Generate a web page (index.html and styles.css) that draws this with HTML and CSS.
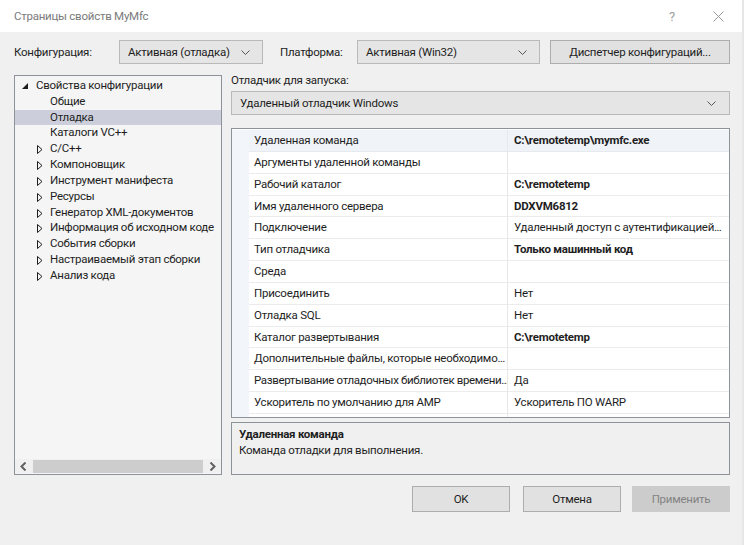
FILE: index.html
```html
<!DOCTYPE html>
<html lang="ru">
<head>
<meta charset="utf-8">
<title>Страницы свойств MyMfc</title>
<link rel="stylesheet" href="styles.css">
</head>
<body>
<div class="window">
  <div class="titlebar">
    <span class="title">Страницы свойств MyMfc</span>
    <span class="tb-btn help">?</span>
    <span class="tb-btn close"><svg width="11" height="11" viewBox="0 0 11 11"><path d="M0.5 0.5 L10.5 10.5 M10.5 0.5 L0.5 10.5" stroke="#9a9a9a" stroke-width="1" fill="none"/></svg></span>
  </div>

  <div class="toolbar">
    <span class="lbl lbl-config">Конфигурация:</span>
    <div class="combo combo-config"><span>Активная (отладка)</span><svg class="chev" width="9" height="5" viewBox="0 0 9 5"><path d="M0.5 0.5 L4.5 4.5 L8.5 0.5" stroke="#555" fill="none"/></svg></div>
    <span class="lbl lbl-platform">Платформа:</span>
    <div class="combo combo-platform"><span>Активная (Win32)</span><svg class="chev" width="9" height="5" viewBox="0 0 9 5"><path d="M0.5 0.5 L4.5 4.5 L8.5 0.5" stroke="#555" fill="none"/></svg></div>
    <div class="btn btn-manager">Диспетчер конфигураций...</div>
  </div>

  <div class="content">
    <div class="tree">
      <div class="tree-items">
        <div class="ti root"><svg class="exp" width="6" height="6" viewBox="0 0 6 6"><path d="M6 0 L6 6 L0 6 Z" fill="#1e1e1e"/></svg>Свойства конфигурации</div>
        <div class="ti leaf">Общие</div>
        <div class="ti leaf sel">Отладка</div>
        <div class="ti leaf">Каталоги VC++</div>
        <div class="ti node"><svg class="col" width="6" height="9" viewBox="0 0 6 9"><path d="M0.5 0.5 L5 4.5 L0.5 8.5 Z" fill="none" stroke="#1e1e1e"/></svg>C/C++</div>
        <div class="ti node"><svg class="col" width="6" height="9" viewBox="0 0 6 9"><path d="M0.5 0.5 L5 4.5 L0.5 8.5 Z" fill="none" stroke="#1e1e1e"/></svg>Компоновщик</div>
        <div class="ti node"><svg class="col" width="6" height="9" viewBox="0 0 6 9"><path d="M0.5 0.5 L5 4.5 L0.5 8.5 Z" fill="none" stroke="#1e1e1e"/></svg>Инструмент манифеста</div>
        <div class="ti node"><svg class="col" width="6" height="9" viewBox="0 0 6 9"><path d="M0.5 0.5 L5 4.5 L0.5 8.5 Z" fill="none" stroke="#1e1e1e"/></svg>Ресурсы</div>
        <div class="ti node"><svg class="col" width="6" height="9" viewBox="0 0 6 9"><path d="M0.5 0.5 L5 4.5 L0.5 8.5 Z" fill="none" stroke="#1e1e1e"/></svg>Генератор XML-документов</div>
        <div class="ti node"><svg class="col" width="6" height="9" viewBox="0 0 6 9"><path d="M0.5 0.5 L5 4.5 L0.5 8.5 Z" fill="none" stroke="#1e1e1e"/></svg>Информация об исходном коде</div>
        <div class="ti node"><svg class="col" width="6" height="9" viewBox="0 0 6 9"><path d="M0.5 0.5 L5 4.5 L0.5 8.5 Z" fill="none" stroke="#1e1e1e"/></svg>События сборки</div>
        <div class="ti node"><svg class="col" width="6" height="9" viewBox="0 0 6 9"><path d="M0.5 0.5 L5 4.5 L0.5 8.5 Z" fill="none" stroke="#1e1e1e"/></svg>Настраиваемый этап сборки</div>
        <div class="ti node"><svg class="col" width="6" height="9" viewBox="0 0 6 9"><path d="M0.5 0.5 L5 4.5 L0.5 8.5 Z" fill="none" stroke="#1e1e1e"/></svg>Анализ кода</div>
      </div>
      <div class="hscroll">
        <svg class="arr" width="7" height="9" viewBox="0 0 7 9"><path d="M5.5 0.5 L1.5 4.5 L5.5 8.5" stroke="#606060" stroke-width="2" fill="none"/></svg>
        <div class="thumb"></div>
        <svg class="arr" width="7" height="9" viewBox="0 0 7 9"><path d="M1.5 0.5 L5.5 4.5 L1.5 8.5" stroke="#606060" stroke-width="2" fill="none"/></svg>
      </div>
    </div>

    <div class="right">
      <div class="rlabel">Отладчик для запуска:</div>
      <div class="combo combo-debugger"><span>Удаленный отладчик Windows</span><svg class="chev" width="9" height="5" viewBox="0 0 9 5"><path d="M0.5 0.5 L4.5 4.5 L8.5 0.5" stroke="#555" fill="none"/></svg></div>

      <div class="grid">
        <div class="row selrow"><div class="gut"></div><div class="k">Удаленная команда</div><div class="v b">C:\remotetemp\mymfc.exe</div></div>
        <div class="row"><div class="gut"></div><div class="k">Аргументы удаленной команды</div><div class="v"></div></div>
        <div class="row"><div class="gut"></div><div class="k">Рабочий каталог</div><div class="v b">C:\remotetemp</div></div>
        <div class="row"><div class="gut"></div><div class="k">Имя удаленного сервера</div><div class="v b">DDXVM6812</div></div>
        <div class="row"><div class="gut"></div><div class="k">Подключение</div><div class="v">Удаленный доступ с аутентификацией…</div></div>
        <div class="row"><div class="gut"></div><div class="k">Тип отладчика</div><div class="v b">Только машинный код</div></div>
        <div class="row"><div class="gut"></div><div class="k">Среда</div><div class="v"></div></div>
        <div class="row"><div class="gut"></div><div class="k">Присоединить</div><div class="v">Нет</div></div>
        <div class="row"><div class="gut"></div><div class="k">Отладка SQL</div><div class="v">Нет</div></div>
        <div class="row"><div class="gut"></div><div class="k">Каталог развертывания</div><div class="v b">C:\remotetemp</div></div>
        <div class="row"><div class="gut"></div><div class="k">Дополнительные файлы, которые необходимо…</div><div class="v"></div></div>
        <div class="row"><div class="gut"></div><div class="k tight">Развертывание отладочных библиотек времени…</div><div class="v">Да</div></div>
        <div class="row"><div class="gut"></div><div class="k">Ускоритель по умолчанию для AMP</div><div class="v">Ускоритель ПО WARP</div></div>
        <div class="row"><div class="gut"></div><div class="k"></div><div class="v"></div></div>
      </div>

      <div class="desc">
        <div class="desc-title">Удаленная команда</div>
        <div class="desc-text">Команда отладки для выполнения.</div>
      </div>
    </div>
  </div>

  <div class="buttons">
    <div class="btn dlg">OK</div>
    <div class="btn dlg">Отмена</div>
    <div class="btn dlg disabled">Применить</div>
  </div>
</div>
</body>
</html>
```

FILE: styles.css
```css
* { box-sizing: border-box; }
html, body { margin: 0; padding: 0; }
body {
  width: 744px;
  height: 545px;
  overflow: hidden;
  background: #f0f0f0;
  font-family: Roboto, "Noto Sans", sans-serif;
  font-size: 11.5px;
  letter-spacing: -0.25px;
  color: #1e1e1e;
}
svg { flex: none; }
.window {
  width: 744px;
  height: 545px;
  display: flex;
  flex-direction: column;
  border-right: 2px solid #e6e6e6;
}
.titlebar {
  height: 32px;
  background: #ffffff;
  display: flex;
  align-items: center;
  padding-left: 14px;
}
.title {
  color: #7a7a7a;
  flex: 1;
}
.tb-btn {
  width: 46px;
  display: flex;
  justify-content: center;
  align-items: center;
  color: #a0a0a0;
  font-size: 13px;
}
.close { margin-right: 1px; }

.toolbar {
  margin-top: 8px;
  height: 24px;
  display: flex;
  align-items: center;
  padding-left: 14px;
}
.lbl-config { width: 105px; }
.lbl-platform { width: 77px; margin-left: 17px; }
.combo {
  height: 24px;
  background: #e5e5e5;
  border: 1px solid #b9b9b9;
  display: flex;
  align-items: center;
  justify-content: space-between;
  padding: 0 12px 0 8px;
}
.combo-config { width: 144px; }
.combo-platform { width: 183px; }
.btn {
  height: 24px;
  background: #e1e1e1;
  border: 1px solid #adadad;
  display: flex;
  align-items: center;
  justify-content: center;
}
.btn-manager { width: 180px; margin-left: 10px; }

.content {
  display: flex;
  margin-top: 11px;
  padding-left: 14px;
}
.tree {
  width: 208px;
  height: 400px;
  border: 1px solid #8e9399;
  background: #f5f5f5;
  display: flex;
  flex-direction: column;
}
.tree-items {
  flex: 1;
  padding-top: 2px;
  overflow: hidden;
}
.ti {
  height: 15.84px;
  line-height: 15.84px;
  white-space: nowrap;
  display: flex;
  align-items: center;
}
.root { padding-left: 7px; }
.root .exp { margin-right: 8px; margin-top: 1px; }
.leaf { padding-left: 35px; }
.node { padding-left: 22px; }
.node .col { margin-right: 7px; margin-top: 1px; }
.sel { background: #cccedb; }
.hscroll {
  height: 14px;
  display: flex;
  align-items: center;
  background: #f0f0f0;
  margin-bottom: 1px;
}
.arr { margin: 0 6px 0 5px; }
.hscroll .arr:last-child { margin: 0 5px 0 6px; }
.thumb {
  flex: 1;
  height: 13px;
  background: #cdcdcd;
}

.right {
  width: 499px;
  margin-left: 9px;
  display: flex;
  flex-direction: column;
}
.rlabel {
  height: 16px;
  line-height: 16px;
  margin-top: -3px;
}
.combo-debugger {
  width: 499px;
  margin-top: 3px;
  height: 24px;
  padding-left: 8px;
  padding-right: 13px;
}
.grid {
  margin-top: 13px;
  height: 290px;
  border: 1px solid #8e9399;
  background: #ffffff;
  overflow: hidden;
  padding-top: 1px;
}
.row {
  height: 21.85px;
  display: flex;
  align-items: stretch;
}
.gut {
  width: 17px;
  background: #f2f5fa;
  flex: none;
}
.row .k, .row .v {
  display: block;
  line-height: 20.85px;
  white-space: nowrap;
  overflow: hidden;
  border-bottom: 1px solid #ececec;
}
.k {
  width: 259px;
  flex: none;
  padding-left: 5px;
  border-right: 1px solid #e8e8e8;
}
.row .tight { letter-spacing: -0.35px; }
.v {
  flex: 1;
  min-width: 0;
  padding-left: 6px;
}
.b { font-weight: bold; }
.selrow .k, .selrow .v { background: #f0f3f8; border-bottom-color: #e6e9ee; border-right-color: #e6e9ee; }

.desc {
  margin-top: 4px;
  height: 53px;
  border: 1px solid #8e9399;
  padding: 3px 7px;
}
.desc-title { font-weight: bold; line-height: 16px; }
.desc-text { line-height: 16px; }

.buttons {
  display: flex;
  justify-content: flex-end;
  padding-right: 12px;
  margin-top: 11px;
}
.dlg {
  width: 98px;
  height: 26px;
}
.dlg + .dlg { margin-left: 13px; }
.disabled {
  background: #cccccc;
  border-color: #cccccc;
  color: #838383;
  margin-left: 11px !important;
}
```
